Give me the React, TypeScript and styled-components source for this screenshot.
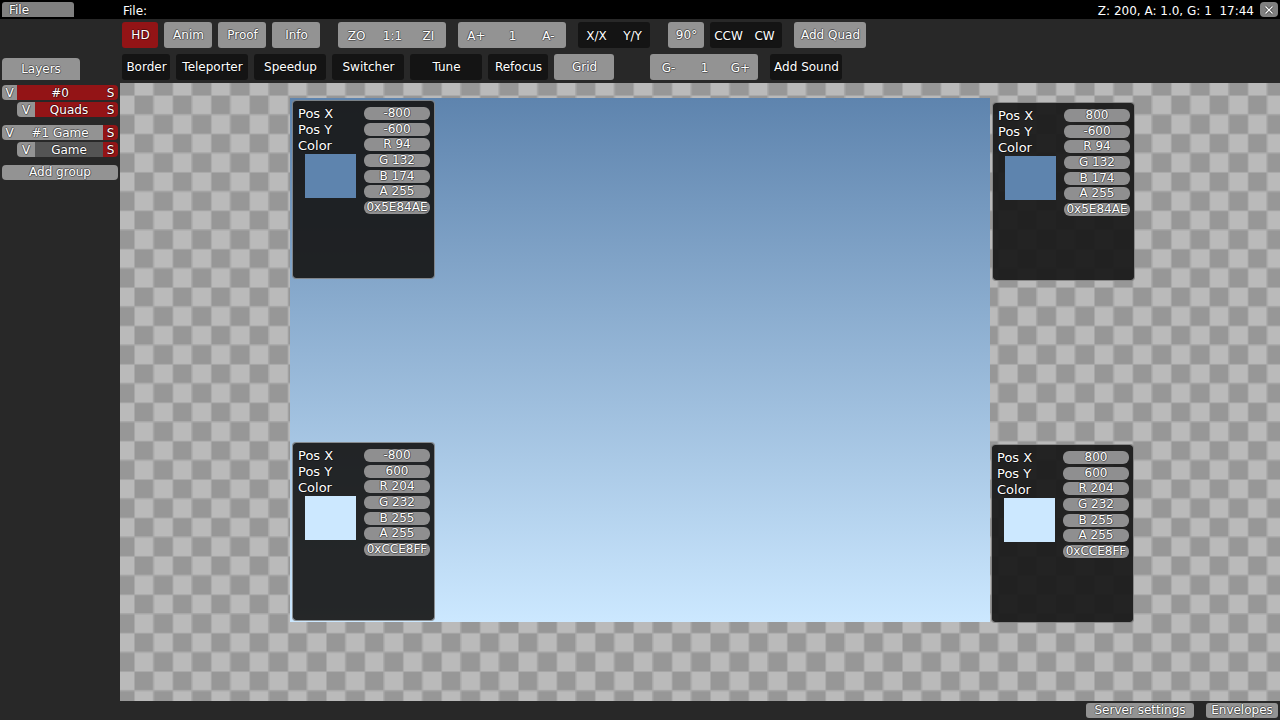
import React from "react";
import styled, { createGlobalStyle, css } from "styled-components";

const GlobalStyle = createGlobalStyle`
  *, *::before, *::after { box-sizing: border-box; }
  body { margin: 0; background: #282828; }
  button, input { font: inherit; color: inherit; border: 0; margin: 0; padding: 0; background: none; }
  button { cursor: pointer; white-space: nowrap; }
  h1, h2, p, ul { margin: 0; padding: 0; font: inherit; list-style: none; }
`;

type Tone = "grey" | "dark" | "red" | "dim";

const tones: Record<Tone, string> = {
  grey: "#939393",
  dark: "#141414",
  red: "#931416",
  dim: "#545454",
};

const outline = css`
  text-shadow: 1px 0 rgba(0, 0, 0, 0.3), -1px 0 rgba(0, 0, 0, 0.3),
    0 1px rgba(0, 0, 0, 0.3), 0 -1px rgba(0, 0, 0, 0.3),
    1px 1px rgba(0, 0, 0, 0.15), -1px -1px rgba(0, 0, 0, 0.15);
`;

const Editor = styled.div`
  display: flex;
  flex-direction: column;
  min-height: 100vh;
  font-family: "DejaVu Sans", sans-serif;
  font-size: 12px;
  line-height: 14px;
  color: #fff;
  background: #282828;
  ${outline}
`;

const MenuBar = styled.header`
  display: flex;
  align-items: flex-start;
  height: 19px;
  padding: 2px 2px 0;
  background: #000;
`;

const MenuButton = styled.button`
  width: 72px;
  height: 15px;
  margin-right: 48px;
  padding: 1px 7px 0;
  text-align: left;
  line-height: 14px;
  border-radius: 3px 3px 0 0;
  background: #808080;
  ${outline}
`;

const FileName = styled.h1`
  flex: 1;
  padding: 2px 1px 0;
`;

const Status = styled.p`
  padding: 2px 6px 0 0;
  white-space: pre;
`;

const CloseButton = styled.button`
  display: grid;
  place-items: center;
  width: 18px;
  height: 15px;
  border-radius: 4px;
  background: #808080;
`;

const Body = styled.div`
  display: flex;
  flex: 1;
`;

const Sidebar = styled.aside`
  flex: 0 0 120px;
  padding: 39px 2px 0;
`;

const SidebarTab = styled.h2`
  width: 78px;
  height: 22px;
  margin-bottom: 5px;
  line-height: 22px;
  text-align: center;
  border-radius: 4px 4px 0 0;
  background: ${tones.grey};
`;

const Group = styled.ul`
  display: flex;
  flex-direction: column;
  gap: 2px;
  margin-bottom: 8px;
`;

const LayerRow = styled.li<{ $nested?: boolean }>`
  display: flex;
  height: 15px;
  margin-left: ${(p) => (p.$nested ? 15 : 0)}px;
  border-radius: 4px;
  overflow: hidden;
`;

const LayerPart = styled.button<{ $tone: Tone; $width?: number }>`
  flex: ${(p) => (p.$width ? `0 0 ${p.$width}px` : "1")};
  padding-top: 1px;
  line-height: 14px;
  background: ${(p) => tones[p.$tone]};
  ${outline}
`;

const WideButton = styled.button`
  display: block;
  width: 100%;
  height: 15px;
  line-height: 15px;
  border-radius: 4px;
  background: ${tones.grey};
  ${outline}
`;

const Workspace = styled.main`
  display: flex;
  flex: 1;
  flex-direction: column;
  min-width: 0;
`;

const Toolbar = styled.div`
  display: flex;
  flex-direction: column;
  gap: 6px;
  height: 64px;
  padding: 3px 2px;
`;

const ToolRow = styled.div`
  display: flex;
  gap: 6px;
`;

const ToolSet = styled.div<{ $before?: number }>`
  display: flex;
  gap: 6px;
  margin-left: ${(p) => p.$before ?? 0}px;
`;

const Segments = styled.div<{ $tone: Tone }>`
  display: flex;
  border-radius: 3px;
  background: ${(p) => tones[p.$tone]};
`;

const Segment = styled.button`
  width: 36px;
  height: 26px;
  padding: 1px 0 0 1px;
  ${outline}
`;

const ToolButton = styled.button<{ $tone: Tone; $width: number }>`
  width: ${(p) => p.$width}px;
  height: 26px;
  padding-left: 1px;
  border-radius: 3px;
  background: ${(p) => tones[p.$tone]};
  ${outline}
`;

const Canvas = styled.section`
  position: relative;
  flex: 1;
  min-height: 618px;
  overflow: hidden;
`;

const Checker = styled.svg`
  position: absolute;
  inset: 0;
  width: 100%;
  height: 100%;
`;

const Quad = styled.div`
  position: absolute;
  left: 170px;
  top: 15px;
  width: 700px;
  height: 524px;
  background: linear-gradient(#5e84ae, #cce8ff);
`;

const Popup = styled.form<{ $x: number; $y: number }>`
  position: absolute;
  left: ${(p) => p.$x}px;
  top: ${(p) => p.$y}px;
  display: flex;
  justify-content: space-between;
  width: 143px;
  height: 179px;
  padding: 6px 4px 6px 5px;
  border: 1px solid rgba(128, 128, 128, 0.85);
  border-radius: 4px;
  background: rgba(24, 24, 24, 0.93);
  background-clip: padding-box;
`;

const PopupLabels = styled.div`
  display: flex;
  flex-direction: column;
`;

const PopupLabel = styled.label`
  height: 16px;
  font-size: 13px;
  line-height: 13px;
`;

const Swatch = styled.button<{ $color: string }>`
  width: 51px;
  height: 44px;
  margin: -1px 0 0 7px;
  background: ${(p) => p.$color};
`;

const Fields = styled.div`
  display: flex;
  flex-direction: column;
  justify-content: space-between;
  width: 66px;
  height: 107px;
`;

const Field = styled.input`
  width: 100%;
  height: 13px;
  line-height: 13px;
  text-align: center;
  border-radius: 6px;
  background: #8f8f90;
  ${outline}
`;

const Footer = styled.footer`
  display: flex;
  justify-content: flex-end;
  gap: 12px;
  height: 19px;
  padding: 2px;
`;

const FooterButton = styled.button<{ $width: number }>`
  width: ${(p) => p.$width}px;
  height: 15px;
  line-height: 15px;
  border-radius: 3px;
  background: ${tones.grey};
  ${outline}
`;

type Point = { x: number; y: number; px: string; py: string; rgb: number[]; hex: string };

const points: Point[] = [
  { x: 172, y: 17, px: "-800", py: "-600", rgb: [94, 132, 174], hex: "5E84AE" },
  { x: 872, y: 19, px: "800", py: "-600", rgb: [94, 132, 174], hex: "5E84AE" },
  { x: 172, y: 359, px: "-800", py: "600", rgb: [204, 232, 255], hex: "CCE8FF" },
  { x: 871, y: 361, px: "800", py: "600", rgb: [204, 232, 255], hex: "CCE8FF" },
];

function PointPopup({ point, id }: { point: Point; id: string }) {
  const [r, g, b] = point.rgb;
  return (
    <Popup $x={point.x} $y={point.y}>
      <PopupLabels>
        <PopupLabel htmlFor={`${id}-x`}>Pos X</PopupLabel>
        <PopupLabel htmlFor={`${id}-y`}>Pos Y</PopupLabel>
        <PopupLabel htmlFor={`${id}-r`}>Color</PopupLabel>
        <Swatch type="button" aria-label="Pick color" $color={`#${point.hex}`} />
      </PopupLabels>
      <Fields>
        <Field id={`${id}-x`} defaultValue={point.px} />
        <Field id={`${id}-y`} defaultValue={point.py} />
        <Field id={`${id}-r`} defaultValue={`R ${r}`} />
        <Field aria-label="Green" defaultValue={`G ${g}`} />
        <Field aria-label="Blue" defaultValue={`B ${b}`} />
        <Field aria-label="Alpha" defaultValue="A 255" />
        <Field aria-label="Hex color" defaultValue={`0x${point.hex}`} />
      </Fields>
    </Popup>
  );
}

function SegmentGroup({ tone, items }: { tone: Tone; items: string[] }) {
  return (
    <Segments $tone={tone}>
      {items.map((item) => (
        <Segment key={item}>{item}</Segment>
      ))}
    </Segments>
  );
}

export default function App() {
  return (
    <Editor>
      <GlobalStyle />
      <MenuBar>
        <MenuButton>File</MenuButton>
        <FileName>File:</FileName>
        <Status>{"Z: 200, A: 1.0, G: 1  17:44"}</Status>
        <CloseButton aria-label="Close">
          <svg width="10" height="10" viewBox="0 0 10 10" fill="none">
            <path d="M1.5 1.5 8.5 8.5M8.5 1.5 1.5 8.5" stroke="#505050" strokeWidth="3" />
            <path d="M1.5 1.5 8.5 8.5M8.5 1.5 1.5 8.5" stroke="#fff" strokeWidth="1.2" />
          </svg>
        </CloseButton>
      </MenuBar>
      <Body>
        <Sidebar>
          <SidebarTab>Layers</SidebarTab>
          <Group>
            <LayerRow>
              <LayerPart $tone="grey" $width={15}>V</LayerPart>
              <LayerPart $tone="red">#0</LayerPart>
              <LayerPart $tone="red" $width={15}>S</LayerPart>
            </LayerRow>
            <LayerRow $nested>
              <LayerPart $tone="grey" $width={18}>V</LayerPart>
              <LayerPart $tone="red">Quads</LayerPart>
              <LayerPart $tone="red" $width={15}>S</LayerPart>
            </LayerRow>
          </Group>
          <Group>
            <LayerRow>
              <LayerPart $tone="grey" $width={15}>V</LayerPart>
              <LayerPart $tone="grey">#1 Game</LayerPart>
              <LayerPart $tone="red" $width={15}>S</LayerPart>
            </LayerRow>
            <LayerRow $nested>
              <LayerPart $tone="grey" $width={18}>V</LayerPart>
              <LayerPart $tone="dim">Game</LayerPart>
              <LayerPart $tone="red" $width={15}>S</LayerPart>
            </LayerRow>
          </Group>
          <WideButton>Add group</WideButton>
        </Sidebar>
        <Workspace>
          <Toolbar>
            <ToolRow>
              <ToolButton $tone="red" $width={36}>HD</ToolButton>
              <ToolButton $tone="grey" $width={48}>Anim</ToolButton>
              <ToolButton $tone="grey" $width={48}>Proof</ToolButton>
              <ToolButton $tone="grey" $width={48}>Info</ToolButton>
              <ToolSet $before={12}>
                <SegmentGroup tone="grey" items={["ZO", "1:1", "ZI"]} />
              </ToolSet>
              <ToolSet $before={6}>
                <SegmentGroup tone="grey" items={["A+", "1", "A-"]} />
              </ToolSet>
              <ToolSet $before={6}>
                <SegmentGroup tone="dark" items={["X/X", "Y/Y"]} />
              </ToolSet>
              <ToolSet $before={12}>
                <ToolButton $tone="grey" $width={36}>90°</ToolButton>
                <SegmentGroup tone="dark" items={["CCW", "CW"]} />
              </ToolSet>
              <ToolSet $before={6}>
                <ToolButton $tone="grey" $width={72}>Add Quad</ToolButton>
              </ToolSet>
            </ToolRow>
            <ToolRow>
              <ToolButton $tone="dark" $width={48}>Border</ToolButton>
              <ToolButton $tone="dark" $width={72}>Teleporter</ToolButton>
              <ToolButton $tone="dark" $width={72}>Speedup</ToolButton>
              <ToolButton $tone="dark" $width={72}>Switcher</ToolButton>
              <ToolButton $tone="dark" $width={72}>Tune</ToolButton>
              <ToolButton $tone="dark" $width={60}>Refocus</ToolButton>
              <ToolButton $tone="grey" $width={60}>Grid</ToolButton>
              <ToolSet $before={30}>
                <SegmentGroup tone="grey" items={["G-", "1", "G+"]} />
              </ToolSet>
              <ToolSet $before={6}>
                <ToolButton $tone="dark" $width={72}>Add Sound</ToolButton>
              </ToolSet>
            </ToolRow>
          </Toolbar>
          <Canvas aria-label="Map">
            <Checker aria-hidden="true">
              <defs>
                <pattern id="checker" x="14" y="12.1" width="38.4" height="38.4" patternUnits="userSpaceOnUse">
                  <rect width="38.4" height="38.4" fill="#bababa" />
                  <rect width="19.2" height="19.2" fill="#979797" />
                  <rect x="19.2" y="19.2" width="19.2" height="19.2" fill="#979797" />
                  <path d="M0 .5H38.4M0 19.7H38.4M.5 0V38.4M19.7 0V38.4" stroke="#a8a8a8" strokeWidth="1" />
                </pattern>
              </defs>
              <rect width="100%" height="100%" fill="url(#checker)" />
            </Checker>
            <Quad />
            {points.map((point, i) => (
              <PointPopup key={i} id={`point-${i}`} point={point} />
            ))}
          </Canvas>
          <Footer>
            <FooterButton $width={108}>Server settings</FooterButton>
            <FooterButton $width={72}>Envelopes</FooterButton>
          </Footer>
        </Workspace>
      </Body>
    </Editor>
  );
}
